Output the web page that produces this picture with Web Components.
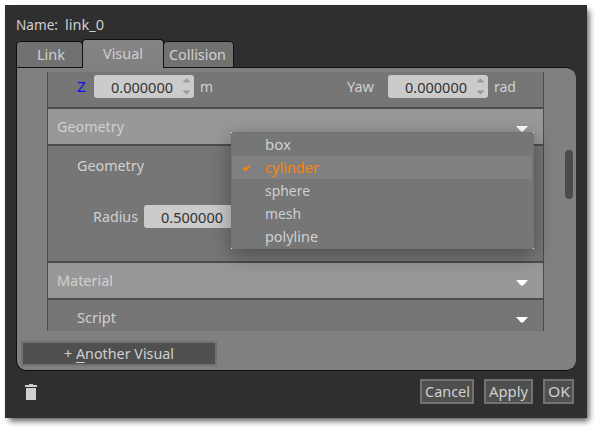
<!DOCTYPE html>
<html lang="en">
<head>
<meta charset="utf-8">
<title>Link inspector</title>
<style>
html, body { margin: 0; width: 596px; height: 427px; overflow: hidden; background: #fff; font: 14.5px/20px "Noto Sans", "Open Sans", sans-serif; color: #d0d0d0; }
</style>
</head>
<body>
<link-inspector></link-inspector>
<script>
function define(name, html, setup) {
  const template = document.createElement('template');
  template.innerHTML = html;
  customElements.define(name, class extends HTMLElement {
    connectedCallback() {
      if (this.shadowRoot) return;
      const root = this.attachShadow({ mode: 'open' });
      root.append(template.content.cloneNode(true));
      if (setup) setup(this, root);
    }
  });
}

// A label whose text is condensed or stretched to its w attribute.
define('fit-label', `<style>
:host { display: block; height: 20px; flex: none; white-space: nowrap; }
span { display: inline-block; transform-origin: 0 50%; white-space: pre; }
::slotted(u) { display: inline-block; height: 20px; text-decoration: none; background: linear-gradient(#d0d0d0, #d0d0d0) 0 19px/100% 1px no-repeat; vertical-align: top; }
</style><span><slot></slot></span>`, (host, root) => {
  const w = +host.getAttribute('w');
  host.style.width = w + 'px';
  const span = root.querySelector('span');
  span.style.transform = `scaleX(${w / span.getBoundingClientRect().width})`;
});

define('tab-button', `<style>
:host { display: flex; box-sizing: border-box; height: 27px; padding-top: 2px; border: 1px solid #101010; border-radius: 4px 4px 0 0; background: #717171; }
:host([selected]) { height: 29px; padding-top: 3px; border-bottom: 0; background: linear-gradient(#858585, #808080); }
</style><slot></slot>`);

define('spin-box', `<style>
:host { display: flex; flex: none; align-items: center; box-sizing: border-box; width: 100px; height: 23px; padding: 0 3px 0 17px; border-radius: 3px; background: #cbcbcb; color: #333; justify-content: space-between; }
svg { display: block; }
</style><fit-label w="62"><slot></slot></fit-label>
<svg width="9" height="17" viewBox="0 0 9 17"><path d="M.5 4.5L4.5 .3L8.5 4.5zM.5 12.5H8.5L4.5 16.7z" fill="#9b9b9b"/></svg>`);

define('drop-arrow', `<style>:host { display: block; width: 12px; height: 6px; } svg { display: block; }</style>
<svg width="12" height="6" viewBox="0 0 12 6"><path d="M0 0H12L7 5.5H5z" fill="#fff"/></svg>`);

define('section-header', `<style>
:host { display: flex; flex: none; box-sizing: border-box; height: 39px; padding: 7px 15px 0 9px; border: solid #4b4b4b; border-width: 2px 0; background: #989898; justify-content: space-between; }
drop-arrow { margin-top: 10px; }
</style><slot></slot><drop-arrow></drop-arrow>`);

define('push-button', `<style>
:host { display: flex; flex: none; box-sizing: border-box; height: 25px; border: 2px solid #727272; background: #4f4f4f; padding: 0 0 0 3px; }
</style><slot></slot>`);

define('menu-item', `<style>
:host { display: flex; box-sizing: border-box; height: 23px; padding: 1px 0 0 33px; margin-right: 1px; position: relative; }
:host([checked]) { color: #fb8211; background: #808080; }
svg { display: none; position: absolute; left: 10px; top: 8px; }
:host([checked]) svg { display: block; }
</style><svg width="9" height="8" viewBox="0 0 9 8"><path d="M1 3.7L3.3 6L7.8 1.5" fill="none" stroke="#fb8211" stroke-width="2"/></svg><slot></slot>`);

define('popup-menu', `<style>
:host { position: absolute; left: 231px; top: 132px; width: 303px; height: 117px; box-sizing: border-box; padding: 1px; z-index: 3;
 background: linear-gradient(#fff,#fff) 0 0/2px 2px, linear-gradient(#fff,#fff) 100% 0/2px 2px, linear-gradient(#fff,#fff) 0 100%/2px 2px, linear-gradient(#fff,#fff) 100% 100%/2px 2px; background-repeat: no-repeat; box-shadow: 0 6px 20px rgba(0,0,0,.36); }
.face { position: absolute; inset: 0; border-radius: 3px; background: #767676; box-shadow: inset 0 0 0 1px #727272; }
.items { position: relative; }
</style><div class="face"></div><div class="items"><slot></slot></div>`);

define('link-inspector', `<style>
:host { display: block; padding: 5px 0 0 5px; }
.window { position: relative; box-sizing: border-box; width: 582px; height: 413px; padding: 9px 11px 0; background: #2f2f2f; box-shadow: 3px 4px 6px -1px rgba(0,0,0,.65); }
.name { display: flex; gap: 7px; height: 25px; }
.tabs { display: flex; align-items: flex-end; height: 29px; position: relative; z-index: 1; }
.tabs tab-button + tab-button { margin-left: -1px; }
.panel { box-sizing: border-box; width: 560px; height: 304px; margin-top: -1px; border: solid #101010; border-width: 1px 0 1px 1px; border-radius: 0 10px 10px 10px; background: #808080; display: grid; grid-template-columns: 497px 8px; grid-template-rows: 259px 25px; column-gap: 21px; row-gap: 10px; padding: 4px 0 0 30px; }
.scroll { box-sizing: border-box; border: solid #4b4b4b; border-width: 0 1px; background: #767676; overflow: hidden; display: flex; flex-direction: column; }
.pose { flex: none; box-sizing: border-box; height: 35px; padding: 3px 0 0 29px; display: flex; }
.pose fit-label { margin-top: 1px; }
.z { color: #1010f0; }
.pose spin-box { margin: 0 6px 0 8px; }
.body { flex: none; height: 115px; padding: 9px 0 0 29px; box-sizing: border-box; }
.radius { display: flex; margin: 30px 0 0 16px; gap: 6px; }
.radius fit-label { margin-top: 1px; }
.script { display: flex; justify-content: space-between; padding: 7px 15px 0 29px; }
.script drop-arrow { margin-top: 10px; }
.thumb { margin-top: 78px; width: 8px; height: 49px; border-radius: 4px; background: #4b4b4b; }
.add { width: 196px; margin-left: -26px; padding-left: 41px; }
.actions { display: flex; gap: 10px; padding: 8px 2px 0 9px; }
.actions svg { margin: 5px auto 0 0; }
</style>
<div class="window">
  <div class="name"><fit-label w="42">Name:</fit-label><fit-label w="39">link_0</fit-label></div>
  <div class="tabs">
    <tab-button style="width:67px;padding-left:20px"><fit-label w="28">Link</fit-label></tab-button>
    <tab-button selected style="width:82px;padding-left:20px"><fit-label w="40">Visual</fit-label></tab-button>
    <tab-button style="width:71px;padding-left:5px"><fit-label w="57">Collision</fit-label></tab-button>
  </div>
  <div class="panel">
    <div class="scroll">
      <div class="pose"><fit-label class="z" w="9">Z</fit-label><spin-box>0.000000</spin-box><fit-label w="13">m</fit-label>
        <fit-label w="27" style="margin-left:134px">Yaw</fit-label><spin-box style="margin-left:14px">0.000000</spin-box><fit-label w="22">rad</fit-label></div>
      <section-header><fit-label w="67">Geometry</fit-label></section-header>
      <div class="body"><fit-label w="67">Geometry</fit-label>
        <div class="radius"><fit-label w="45">Radius</fit-label><spin-box>0.500000</spin-box></div></div>
      <section-header><fit-label w="56">Material</fit-label></section-header>
      <div class="script"><fit-label w="39">Script</fit-label><drop-arrow></drop-arrow></div>
    </div>
    <div class="thumb"></div>
    <push-button class="add"><fit-label w="110">+ <u>A</u>nother Visual</fit-label></push-button>
  </div>
  <div class="actions">
    <svg width="12" height="16" viewBox="0 0 12 16" fill="#d0d0d0"><path d="M4 0H8V1H12V3H0V1H4zM1 4H11V16H1z"/></svg>
    <push-button style="width:54px"><fit-label w="45">Cancel</fit-label></push-button>
    <push-button style="width:49px"><fit-label w="39">Apply</fit-label></push-button>
    <push-button style="width:31px"><fit-label w="22">OK</fit-label></push-button>
  </div>
</div>
<popup-menu>
  <menu-item><fit-label w="26">box</fit-label></menu-item>
  <menu-item checked><fit-label w="54">cylinder</fit-label></menu-item>
  <menu-item><fit-label w="45">sphere</fit-label></menu-item>
  <menu-item><fit-label w="36">mesh</fit-label></menu-item>
  <menu-item><fit-label w="53">polyline</fit-label></menu-item>
</popup-menu>`);
</script>
</body>
</html>
